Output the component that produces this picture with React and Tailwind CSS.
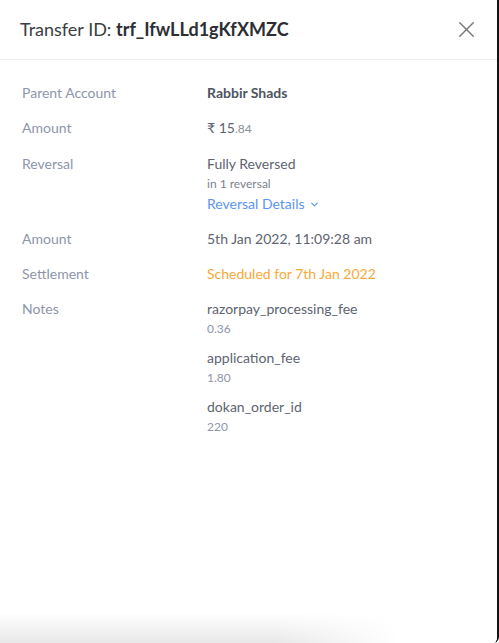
import { X, ChevronDown } from 'lucide-react'

const NOTES = [
  { key: 'razorpay_processing_fee', value: '0.36' },
  { key: 'application_fee', value: '1.80' },
  { key: 'dokan_order_id', value: '220' },
]

function Row({ label, children }) {
  return (
    <div className="flex">
      <div className="w-[185px] shrink-0 text-[14px] leading-5 text-[#8e95ab]">{label}</div>
      <div className="flex-1 text-[14px] leading-5 text-[#5e6472]">{children}</div>
    </div>
  )
}

export default function App() {
  return (
    <div className="w-[499px] h-[643px] bg-white flex" style={{ fontFamily: 'Lato, "Noto Sans", sans-serif' }}>
      <div className="flex-1 flex flex-col border-r-2 border-[#141414] rounded-br-[6px] overflow-hidden">
        {/* Header */}
        <div className="h-[60px] shrink-0 flex items-center justify-between pl-5 pr-[17px] border-b border-[#ececec]">
          <h2 className="text-[18px] text-[#3b3d42]">
            Transfer ID: <span className="font-bold text-[#2c2e33]">trf_IfwLLd1gKfXMZC</span>
          </h2>
          <button className="text-[#7a7a7a]">
            <X size={27} strokeWidth={1.3} />
          </button>
        </div>

        {/* Details */}
        <div className="flex-1 flex flex-col gap-[15px] pt-[23px] pl-[22px]">
          <Row label="Parent Account">
            <span className="font-bold text-[#4d5462]">Rabbir Shads</span>
          </Row>
          <Row label="Amount">
            <span>₹ 15</span>
            <span className="text-[12px] text-[#8a8f99]">.84</span>
          </Row>
          <Row label="Reversal">
            <div>Fully Reversed</div>
            <div className="text-[12px] text-[#7d828e]">in 1 reversal</div>
            <button className="flex items-center gap-1 text-[#5c94f1]">
              Reversal Details
              <ChevronDown size={11} strokeWidth={2.5} />
            </button>
          </Row>
          <Row label="Amount">5th Jan 2022, 11:09:28 am</Row>
          <Row label="Settlement">
            <span className="text-[#f7a93a]">Scheduled for 7th Jan 2022</span>
          </Row>
          <Row label="Notes">
            <div className="flex flex-col gap-[10px]">
              {NOTES.map((n) => (
                <div key={n.key}>
                  <div>{n.key}</div>
                  <div className="text-[12px] leading-[19px] text-[#8e95ab]">{n.value}</div>
                </div>
              ))}
            </div>
          </Row>
        </div>

        {/* bottom shadow */}
        <div className="h-[30px] shrink-0 bg-[linear-gradient(to_right,rgba(255,255,255,0)_55%,#fff_80%),linear-gradient(to_bottom,#fff,#e8e8e8)]" />
      </div>
    </div>
  )
}
